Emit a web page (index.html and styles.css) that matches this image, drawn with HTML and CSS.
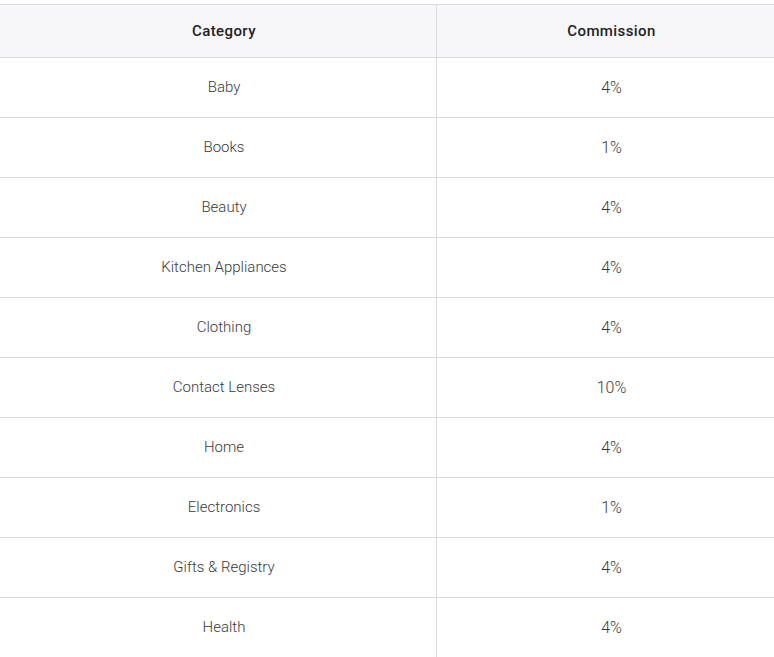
FILE: index.html
```html
<!DOCTYPE html>
<html>
<head>
<meta charset="utf-8">
<link rel="stylesheet" href="styles.css">
</head>
<body>
<table class="rates">
  <thead>
    <tr><th class="cat">Category</th><th class="com">Commission</th></tr>
  </thead>
  <tbody>
    <tr><td class="cat">Baby</td><td class="com">4%</td></tr>
    <tr><td class="cat">Books</td><td class="com">1%</td></tr>
    <tr><td class="cat">Beauty</td><td class="com">4%</td></tr>
    <tr><td class="cat">Kitchen Appliances</td><td class="com">4%</td></tr>
    <tr><td class="cat">Clothing</td><td class="com">4%</td></tr>
    <tr><td class="cat">Contact Lenses</td><td class="com">10%</td></tr>
    <tr><td class="cat">Home</td><td class="com">4%</td></tr>
    <tr><td class="cat">Electronics</td><td class="com">1%</td></tr>
    <tr><td class="cat">Gifts &amp; Registry</td><td class="com">4%</td></tr>
    <tr><td class="cat">Health</td><td class="com">4%</td></tr>
  </tbody>
</table>
</body>
</html>
```
FILE: styles.css
```css
html, body {
  margin: 0;
  padding: 0;
  overflow: hidden;
  background: #ffffff;
}
body {
  padding-top: 4px;
  font-family: Roboto, "Liberation Sans", sans-serif;
}
.rates {
  border-collapse: collapse;
  table-layout: fixed;
  width: 786px;
}
.rates th, .rates td {
  text-align: center;
  padding: 0 0 1px 0;
  border: 1px solid #dadada;
  border-left: none;
  border-right: none;
}
.rates .cat {
  width: 424px;
  padding-left: 12px;
  border-right: 1px solid #dadada;
}
.rates th {
  height: 51px;
  background: #f7f7fa;
  font-size: 15px;
  font-weight: 500;
  letter-spacing: 0.4px;
  color: #222222;
}
.rates td {
  height: 58px;
  font-size: 15px;
  font-weight: 300;
  color: #3a3a3a;
}
.rates td.com {
  font-size: 16px;
}
```
